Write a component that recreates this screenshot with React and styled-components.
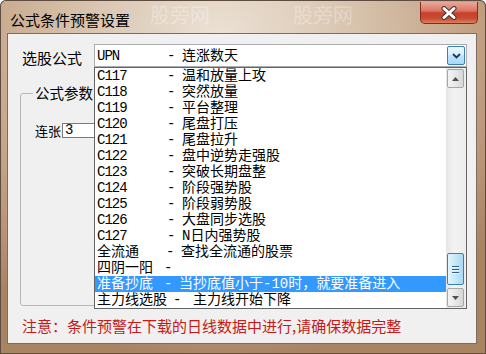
import React from 'react';
import styled, { createGlobalStyle } from 'styled-components';

const GlobalStyle = createGlobalStyle`
  html, body {
    margin: 0;
    padding: 0;
  }
  body {
    font-family: "Noto Sans CJK SC", "Liberation Sans", sans-serif;
    color: #000;
  }
`;

// code, description, and the widths of the code and dash cells
const formulas = [
  { code: 'C117', desc: '温和放量上攻' },
  { code: 'C118', desc: '突然放量' },
  { code: 'C119', desc: '平台整理' },
  { code: 'C120', desc: '尾盘打压' },
  { code: 'C121', desc: '尾盘拉升' },
  { code: 'C122', desc: '盘中逆势走强股' },
  { code: 'C123', desc: '突破长期盘整' },
  { code: 'C124', desc: '阶段强势股' },
  { code: 'C125', desc: '阶段弱势股' },
  { code: 'C126', desc: '大盘同步选股' },
  { code: 'C127', desc: 'N日内强势股' },
  { code: '全流通', desc: '查找全流通的股票', codeW: 69, dashW: 15 },
  { code: '四阴一阳', desc: '', codeW: 67, dashW: 15 },
  { code: '准备抄底', desc: '当抄底值小于-10时，就要准备进入', codeW: 67, dashW: 15, selected: true },
  { code: '主力线选股', desc: '主力线开始下降', codeW: 76, dashW: 20 },
];

const isLatin = (s) => /^[A-Za-z0-9]+$/.test(s);

const FormulaText = ({ code, desc, codeW = 70, dashW = 15 }) => (
  <>
    <Code $w={codeW} $latin={isLatin(code)}>{code}</Code>
    <Dash $w={dashW}>-</Dash>
    <Desc>{desc}</Desc>
  </>
);

const App = () => (
  <>
    <GlobalStyle />
    <Window>
      <TitleBar>
        <Title>公式条件预警设置</Title>
        <Watermark $left={150}>股旁网</Watermark>
        <Watermark $left={293}>股旁网</Watermark>
        <CloseButton>
          <svg width="18" height="14" viewBox="0 0 18 14">
            <path d="M4 2.5 L14 11.5 M14 2.5 L4 11.5" stroke="#4a3434" strokeWidth="5" strokeLinecap="round" />
            <path d="M4 2.5 L14 11.5 M14 2.5 L4 11.5" stroke="#ffffff" strokeWidth="3" strokeLinecap="round" />
          </svg>
        </CloseButton>
      </TitleBar>

      <Client>
        <FormulaRow>
          <FieldLabel>选股公式</FieldLabel>
          <Combo>
            <ComboValue>
              <FormulaText code="UPN" desc="连涨数天" />
            </ComboValue>
            <DropButton>
              <svg width="9" height="6" viewBox="0 0 9 6">
                <path d="M1 1 L4.5 4.5 L8 1" stroke="#1e395b" strokeWidth="1.8" fill="none" />
              </svg>
            </DropButton>

            <DropList>
              <Rows>
                {formulas.map((f) => (
                  <Row key={f.code} $selected={f.selected}>
                    <FormulaText {...f} />
                  </Row>
                ))}
              </Rows>
              <ScrollBar>
                <ScrollButton>
                  <svg width="7" height="4" viewBox="0 0 7 4">
                    <path d="M0 4 L3.5 0 L7 4 Z" fill="#505050" />
                  </svg>
                </ScrollButton>
                <Track>
                  <Thumb>
                    <Grip />
                    <Grip />
                    <Grip />
                  </Thumb>
                </Track>
                <ScrollButton>
                  <svg width="7" height="4" viewBox="0 0 7 4">
                    <path d="M0 0 L3.5 4 L7 0 Z" fill="#505050" />
                  </svg>
                </ScrollButton>
              </ScrollBar>
            </DropList>
          </Combo>
        </FormulaRow>

        <Group>
          <Legend>公式参数</Legend>
          <ParamRow>
            <ParamLabel>连张</ParamLabel>
            <ParamInput>3</ParamInput>
          </ParamRow>
        </Group>

        <Note>注意：条件预警在下载的日线数据中进行,请确保数据完整</Note>
      </Client>
    </Window>
  </>
);

const Window = styled.div`
  width: 486px;
  height: 354px;
  display: flex;
  flex-direction: column;
  box-sizing: border-box;
  overflow: hidden;
  border-radius: 6px 6px 0 0;
  background: radial-gradient(
    ellipse 70% 90% at 45% 12%,
    #ece2d6 0%,
    #dbc8b4 35%,
    #c5a587 72%,
    #a98463 100%
  );
  box-shadow: inset 0 0 0 1px #5e4c40;
`;

const TitleBar = styled.div`
  position: relative;
  height: 33px;
  display: flex;
  align-items: flex-start;
  padding-left: 10px;
`;

const Title = styled.div`
  margin-top: 11px;
  font-size: 15px;
  line-height: 17px;
  color: #000;
  position: relative;
  z-index: 1;
`;

const Watermark = styled.div`
  position: absolute;
  left: ${(p) => p.$left}px;
  top: 4px;
  font-size: 20px;
  line-height: 22px;
  color: rgba(255, 255, 255, 0.3);
  pointer-events: none;
`;

const CloseButton = styled.div`
  margin-left: auto;
  margin-right: 8px;
  margin-top: 2px;
  width: 58px;
  height: 22px;
  box-sizing: border-box;
  border: 1px solid #7b2f22;
  border-top: none;
  border-radius: 0 0 5px 5px;
  background: linear-gradient(
    #eaa89c 0%,
    #dc7563 42%,
    #c7412c 52%,
    #c84b33 78%,
    #e0805f 100%
  );
  display: flex;
  align-items: center;
  justify-content: center;
  position: relative;
  z-index: 1;
`;

const Client = styled.div`
  flex: 1;
  margin: 0 9px 10px 7px;
  box-sizing: border-box;
  border: 1px solid #7d6d60;
  background: #f0f0f0;
  display: flex;
  flex-direction: column;
`;

const FormulaRow = styled.div`
  display: flex;
  align-items: flex-start;
  margin-top: 10px;
  padding-left: 14px;
  height: 23px;
`;

const FieldLabel = styled.div`
  width: 60px;
  margin-right: 12px;
  padding-top: 4px;
  font-size: 15px;
  line-height: 20px;
`;

const Combo = styled.div`
  position: relative;
  width: 373px;
  height: 23px;
  box-sizing: border-box;
  border: 1px solid #abadb3;
  background: #fff;
  display: flex;
  align-items: center;
`;

const ComboValue = styled.div`
  flex: 1;
  display: flex;
  padding-left: 2px;
  font-size: 14px;
  line-height: 16px;
`;

const DropButton = styled.div`
  width: 18px;
  height: 19px;
  margin-right: 1px;
  box-sizing: border-box;
  border: 1px solid #3c7fb1;
  border-radius: 2px;
  background: linear-gradient(#eaf6fd 0%, #d9f0fc 45%, #bee6fd 50%, #a7d9f5 100%);
  display: flex;
  align-items: center;
  justify-content: center;
`;

const DropList = styled.div`
  position: absolute;
  top: 22px;
  left: -1px;
  width: 373px;
  height: 242px;
  box-sizing: border-box;
  border: 1px solid #646464;
  background: #fff;
  display: flex;
  z-index: 2;
`;

const Rows = styled.div`
  flex: 1;
  display: flex;
  flex-direction: column;
`;

const Row = styled.div`
  height: 16px;
  line-height: 16px;
  padding-left: 2px;
  display: flex;
  font-size: 14px;
  white-space: nowrap;
  background: ${(p) => (p.$selected ? '#3399ff' : 'transparent')};
  color: ${(p) => (p.$selected ? '#fff' : '#000')};
`;

const Code = styled.span`
  width: ${(p) => p.$w}px;
  flex: none;
  font-family: "Liberation Mono", "Noto Sans CJK SC", monospace;
  letter-spacing: ${(p) => (p.$latin ? '-1px' : '0')};
`;

const Dash = styled.span`
  width: ${(p) => p.$w}px;
  flex: none;
  font-family: "Liberation Mono", monospace;
`;

const Desc = styled.span`
  font-family: "Liberation Mono", "Noto Sans CJK SC", monospace;
`;

const ScrollBar = styled.div`
  width: 20px;
  box-sizing: border-box;
  padding: 1px 2px 1px 1px;
  background: linear-gradient(90deg, #e6e6e6, #f2f2f2 40%, #ececec);
  display: flex;
  flex-direction: column;
`;

const ScrollButton = styled.div`
  height: 19px;
  box-sizing: border-box;
  border: 1px solid #a7a7a7;
  border-radius: 2px;
  background: linear-gradient(90deg, #f3f3f3 0%, #e8e8e8 50%, #d6d6d6 100%);
  display: flex;
  align-items: center;
  justify-content: center;
`;

const Track = styled.div`
  flex: 1;
  display: flex;
  flex-direction: column;
`;

const Thumb = styled.div`
  margin-top: auto;
  margin-bottom: 3px;
  height: 32px;
  box-sizing: border-box;
  border: 1px solid #3c7fb1;
  border-radius: 2px;
  background: linear-gradient(90deg, #e3f4fc 0%, #c6e8f8 50%, #a9d9f2 100%);
  display: flex;
  flex-direction: column;
  align-items: center;
  justify-content: center;
  gap: 2px;
`;

const Grip = styled.div`
  width: 7px;
  height: 1px;
  background: #2f5f8c;
  box-shadow: 0 1px 0 #eef8fd;
`;

const Group = styled.fieldset`
  margin: 18px 0 0 12px;
  width: 420px;
  height: 221px;
  box-sizing: border-box;
  min-width: 0;
  padding: 0 0 0 12px;
  border: 1px solid #b3b8bb;
  border-radius: 3px;
`;

const Legend = styled.legend`
  padding: 0 2px;
  font-size: 14.5px;
  line-height: 16px;
`;

const ParamRow = styled.div`
  margin-top: 22px;
  height: 15px;
  display: flex;
  align-items: center;
`;

const ParamLabel = styled.div`
  width: 27px;
  padding-left: 2px;
  font-size: 13px;
  line-height: 15px;
`;

const ParamInput = styled.div`
  width: 60px;
  height: 15px;
  box-sizing: border-box;
  border: 1px solid #7a7a7a;
  background: #fff;
  padding-left: 2px;
  font-family: "Liberation Mono", monospace;
  font-size: 14px;
  line-height: 13px;
`;

const Note = styled.div`
  margin-top: 11px;
  padding-left: 14px;
  font-size: 15px;
  line-height: 17px;
  color: #c81818;
`;

export default App;
